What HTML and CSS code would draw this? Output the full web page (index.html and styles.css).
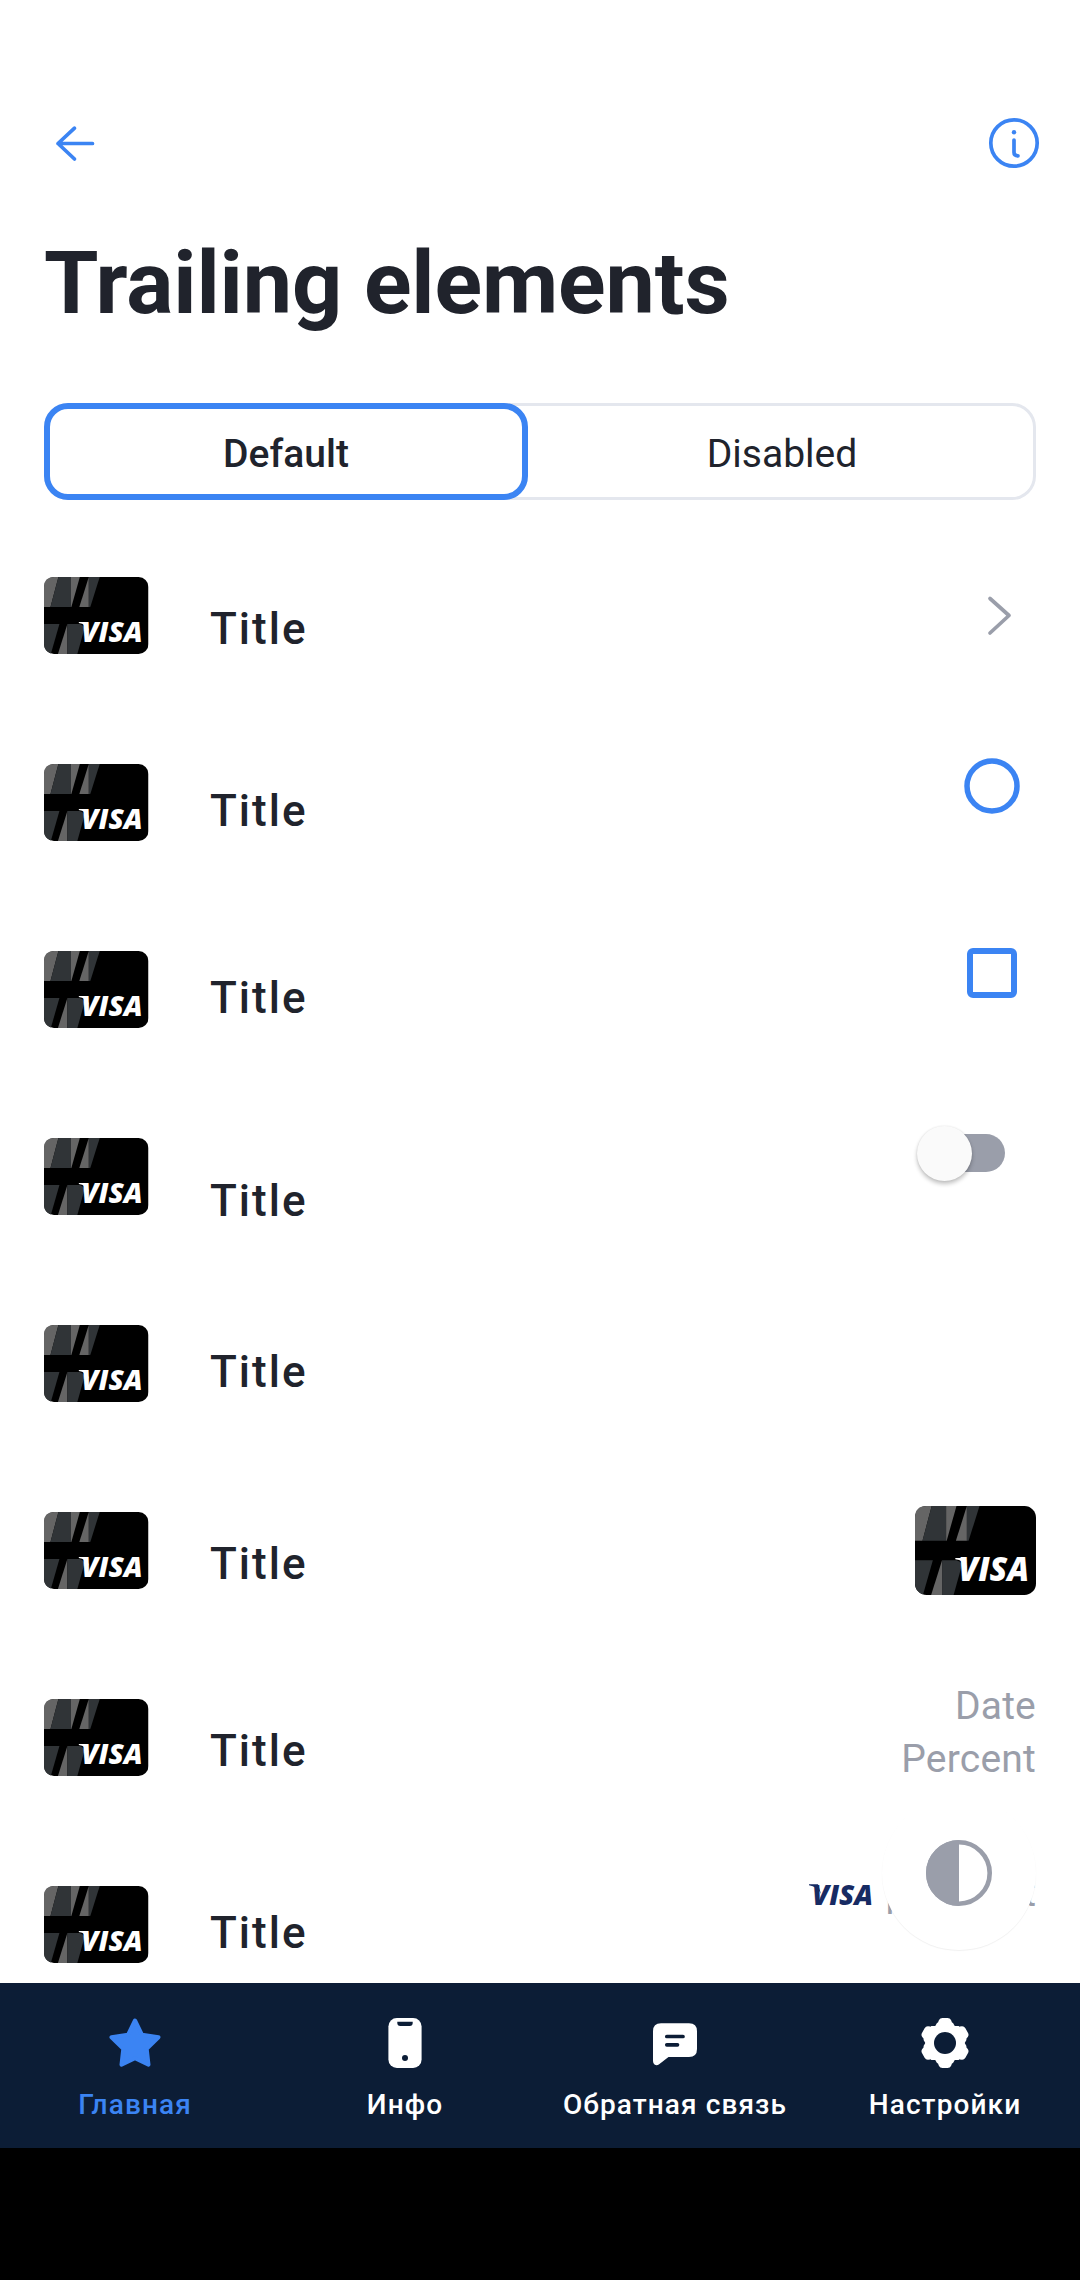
FILE: index.html
```html
<!DOCTYPE html>
<html lang="ru">
<head>
<meta charset="utf-8">
<title>Trailing elements</title>
<link rel="stylesheet" href="styles.css">
</head>
<body>
<svg class="defs" width="0" height="0" aria-hidden="true">
  <symbol id="card" viewBox="0 0 105 77" preserveAspectRatio="none">
    <rect width="105" height="77" rx="10" fill="#000"/>
    <path d="M10 0H14.5L6.5 30H0V10Q0 0 10 0z" fill="#656565"/>
    <path d="M14.5 0H27V30H6.5z" fill="#303437"/>
    <path d="M27 0H36L27.5 30H27z" fill="#656565"/>
    <path d="M45 0V30H35.5z" fill="#656565"/>
    <path d="M45 0H56L46.5 30H45z" fill="#303437"/>
    <path d="M0 47H15.5L7 76.5Q0 74 0 67z" fill="#303437"/>
    <path d="M23.5 47V77H14z" fill="#656565"/>
    <path d="M23.500 47H36Q40.500 48.500 40.500 52L33.500 77H23.500z" fill="#303437"/>
    <path d="M35 45H43L45 54Q42 46.500 35 46z" fill="#fff"/>
    <text x="37.500" y="65.300" class="visa" font-size="28.800" textLength="61.500" lengthAdjust="spacingAndGlyphs" fill="#fff">VISA</text>
  </symbol>
</svg>

<main class="page">
  <header class="topbar">
    <svg width="66" height="66" viewBox="0 0 66 66" fill="none" stroke="#3b84f3" stroke-width="3.700" stroke-linecap="round" stroke-linejoin="round"><path d="M48.500 33.500H14M30.500 18.200L14 33.500L30.500 49"/></svg>
    <svg width="66" height="66" viewBox="0 0 66 66" fill="none" stroke="#3b84f3" stroke-width="3.700" stroke-linecap="round"><circle cx="33" cy="33" r="23.200"/><path d="M33 30V42.500Q33 45.800 37 45.800"/><circle cx="33" cy="22.300" r="2.200" fill="#3b84f3" stroke="none"/></svg>
  </header>

  <h1 class="heading">Trailing elements</h1>

  <div class="segments">
    <div class="segment segment-active">Default</div>
    <div class="segment">Disabled</div>
  </div>

  <div class="list">
    <div class="row">
      <svg class="thumb"><use href="#card"/></svg><span class="title title-mid">Title</span>
      <svg class="chevron" width="27" height="42" viewBox="0 0 27 42" fill="none" stroke="#9a9eaa" stroke-width="3.700" stroke-linecap="round" stroke-linejoin="round"><path d="M4 4.500L23 21.500L4 39"/></svg>
    </div>
    <div class="row">
      <svg class="thumb"><use href="#card"/></svg><span class="title">Title</span>
      <svg class="radio" width="56" height="56" viewBox="0 0 56 56"><circle cx="28" cy="28" r="25" fill="none" stroke="#3b84f3" stroke-width="5.500"/></svg>
    </div>
    <div class="row">
      <svg class="thumb"><use href="#card"/></svg><span class="title">Title</span>
      <span class="checkbox"></span>
    </div>
    <div class="row">
      <svg class="thumb"><use href="#card"/></svg><span class="title title-low">Title</span>
      <span class="switch"><span class="knob"></span></span>
    </div>
    <div class="row">
      <svg class="thumb"><use href="#card"/></svg><span class="title">Title</span>
    </div>
    <div class="row">
      <svg class="thumb"><use href="#card"/></svg><span class="title title-mid">Title</span>
      <svg class="card-large"><use href="#card"/></svg>
    </div>
    <div class="row">
      <svg class="thumb"><use href="#card"/></svg><span class="title title-mid">Title</span>
      <span class="details">Date<br>Percent</span>
    </div>
    <div class="row">
      <svg class="thumb"><use href="#card"/></svg><span class="title">Title</span>
      <span class="payment">
        <svg class="logo" width="64" height="24" viewBox="0 0 64 24" fill="#172b63"><path d="M0 1.200H9L12 11Q8 3.500 0 2.300z"/><text x="3" y="21.500" class="visa" font-size="28.800" textLength="61" lengthAdjust="spacingAndGlyphs">VISA</text></svg>
        <span>payment</span>
      </span>
    </div>
  </div>

  <button class="fab" aria-label="Theme">
    <svg width="66" height="66" viewBox="0 0 66 66"><circle cx="33" cy="33" r="30.700" fill="none" stroke="#9a9eaa" stroke-width="4.600"/><path d="M33 0A33 33 0 0 0 33 66z" fill="#9a9eaa"/></svg>
  </button>
</main>

<nav class="tabs">
  <div class="tab tab-active">
    <svg width="66" height="66" viewBox="0 0 66 66" fill="currentColor" stroke="currentColor" stroke-width="4" stroke-linejoin="round"><path d="M33 10.500L40 24.800L56.500 27.200L44.700 38.700L46.500 54.700L33 48.300L19.500 54.700L21.300 38.700L9.500 27.200L26 24.800z"/></svg>
    <span>Главная</span>
  </div>
  <div class="tab">
    <svg width="66" height="66" viewBox="0 0 66 66"><rect x="16.400" y="8" width="33.200" height="50" rx="8.500" fill="#fff"/><path d="M25.300 11.800H40.700V13Q40.700 16 37.700 16H28.300Q25.300 16 25.300 13z" fill="#0c1d36"/><circle cx="33" cy="48" r="3" fill="#0c1d36"/></svg>
    <span>Инфо</span>
  </div>
  <div class="tab">
    <svg width="66" height="66" viewBox="0 0 66 66"><path d="M19 13.300H47Q55 13.300 55 21.300V39Q55 47 47 47H26.500L16.800 54.500Q14.500 56 12.500 54.500Q11 53.300 11 51V21.300Q11 13.300 19 13.300z" fill="#fff"/><path d="M24.800 26.500H41M24.800 34.800H35.500" stroke="#0c1d36" stroke-width="3.700" stroke-linecap="round"/></svg>
    <span>Обратная связь</span>
  </div>
  <div class="tab">
    <svg width="66" height="66" viewBox="0 0 66 66"><g fill="#fff"><circle cx="33" cy="33" r="18.500"/><path id="tooth" d="M22.500 18Q25.500 16 26.200 12L27 10Q28 8 30.500 8H35.500Q38 8 39 10L39.800 12Q40.500 16 43.500 18L47 50H19z"/><use href="#tooth" transform="rotate(60 33 33)"/><use href="#tooth" transform="rotate(120 33 33)"/><use href="#tooth" transform="rotate(180 33 33)"/><use href="#tooth" transform="rotate(240 33 33)"/><use href="#tooth" transform="rotate(300 33 33)"/></g><circle cx="33" cy="33" r="11" fill="#0c1d36"/></svg>
    <span>Настройки</span>
  </div>
</nav>
<div class="system-bar"></div>
</body>
</html>
```
FILE: styles.css
```css
* { box-sizing: border-box; }

body {
  margin: 0;
  width: 1080px;
  height: 2280px;
  display: flex;
  flex-direction: column;
  overflow: hidden;
  background: #fff;
  color: #20232c;
  font-family: Roboto, sans-serif;
}

svg { display: block; flex: none; }
.defs { position: absolute; }

.visa {
  font-family: "Open Sans", sans-serif;
  font-style: italic;
  font-weight: 800;
}

.page {
  position: relative;
  height: 1983px;
  padding: 110px 44px 0;
  overflow: hidden;
}

.topbar {
  display: flex;
  justify-content: space-between;
  height: 66px;
  margin-right: -11px;
}

.heading {
  margin: 55px 0 0;
  height: 104px;
  line-height: 104px;
  font-size: 88px;
  font-weight: 700;
  letter-spacing: -0.1px;
}

.segments {
  display: flex;
  height: 97px;
  margin-top: 68px;
  border-radius: 24px;
  box-shadow: inset 0 0 0 3px #e4e7ee;
  font-size: 39px;
}

.segment {
  flex: 1;
  display: flex;
  align-items: center;
  justify-content: center;
  padding-top: 4px;
}

.segment-active {
  flex: 0 0 484px;
  border: 6px solid #3b84f3;
  border-radius: 24px;
  background: #fff;
  font-weight: 500;
}

.list { margin-top: 57px; }

.row {
  display: flex;
  align-items: flex-start;
  height: 187px;
}

.thumb {
  width: 104.5px;
  height: 77px;
  margin-top: 20px;
}

.title {
  flex: 1;
  margin: 41px 0 0 61.5px;
  line-height: 52px;
  font-size: 44px;
  font-weight: 500;
  letter-spacing: 2px;
}

.title-mid { margin-top: 46px; }
.title-low { margin-top: 57px; }

.chevron { margin: 37px 23px 0 0; }
.radio { margin: 14px 16px 0 0; }

.checkbox {
  width: 50px;
  height: 50px;
  margin: 17px 19px 0 0;
  border: 6px solid #3b84f3;
  border-radius: 6px;
}

.switch {
  display: flex;
  align-items: center;
  width: 78px;
  height: 38px;
  margin: 16px 31px 0 0;
  border-radius: 19px;
  background: #9a9eaa;
}

.knob {
  flex: none;
  width: 55px;
  height: 55px;
  margin: 0 0 0 -10px;
  border-radius: 50%;
  background: #fafafa;
  box-shadow: 0 3px 4px rgba(0, 0, 0, .24), 0 0 2px rgba(0, 0, 0, .1);
}

.card-large {
  width: 121px;
  height: 89px;
  margin-top: 14px;
}

.details {
  margin-top: 1px;
  color: #9a9eaa;
  font-size: 39px;
  line-height: 53px;
  letter-spacing: 0.2px;
  text-align: right;
}

.payment {
  display: flex;
  gap: 13px;
  margin-top: 5px;
  color: #9a9eaa;
  font-size: 39px;
  line-height: 45px;
}

.logo {
  margin-top: 12px;
  overflow: visible;
}

.fab {
  position: absolute;
  left: 882px;
  top: 1796px;
  display: flex;
  align-items: center;
  justify-content: center;
  width: 154px;
  height: 154px;
  padding: 0;
  border: 0;
  border-radius: 50%;
  background: #fff;
  box-shadow: 0 1px 1px rgba(0, 0, 0, .06);
}

.tabs {
  display: flex;
  height: 165px;
  background: #0c1d36;
  color: #fff;
}

.tab {
  flex: 1;
  display: flex;
  flex-direction: column;
  align-items: center;
  padding-top: 27px;
  font-size: 28px;
  font-weight: 500;
  line-height: 32px;
  letter-spacing: 1.1px;
  white-space: nowrap;
}

.tab span { margin-top: 13px; }
.tab-active { color: #3b84f3; }

.system-bar {
  height: 132px;
  background: #000;
}
```
